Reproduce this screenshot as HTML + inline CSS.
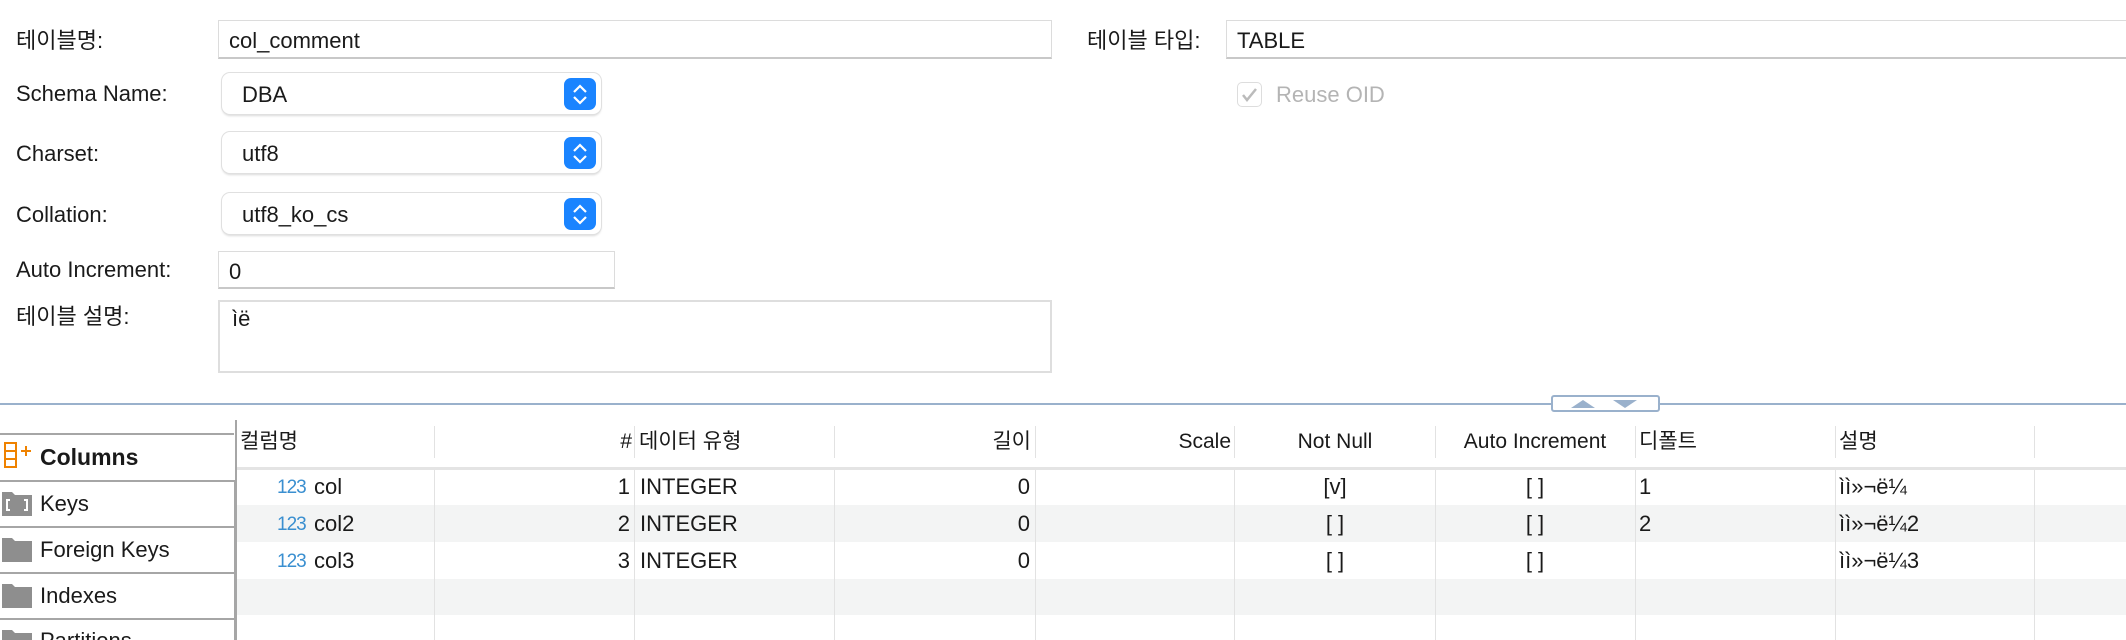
<!DOCTYPE html>
<html style="overflow:hidden;height:640px"><head><meta charset="utf-8"><style>
*{box-sizing:border-box;margin:0;padding:0}
body{width:2126px;height:640px;background:#fff;position:relative;overflow:hidden;font-family:"Liberation Sans","Noto Sans CJK KR",sans-serif;font-size:22px;color:#1a1a1a}
.a{position:absolute;white-space:nowrap;line-height:26px}
.tf{position:absolute;border:1px solid #dcdcdc;border-bottom:2px solid #c8c8c8;background:#fff;padding-left:10px;line-height:40px}
.dd{position:absolute;border-radius:8px;background:#fff;box-shadow:0 0 0 1px #e0e0e0,0 2px 2px rgba(0,0,0,.15);padding-left:20px}
.st{position:absolute;right:5px;top:5px;width:32px;height:32px;border-radius:7px;background:#1a84ff}
.tab{position:absolute;left:0;width:236px;height:46px;border-top:2px solid #a6a6a6;border-right:2px solid #a6a6a6;background:#fff}
.vl{position:absolute;width:1px;background:#e2e2e2}
</style></head><body>
<div class="a" style="left:16px;top:28px">테이블명:</div>
<div class="tf" style="left:218px;top:20px;width:834px;height:39px">col_comment</div>
<div class="a" style="left:16px;top:81px">Schema Name:</div>
<div class="dd" style="left:222px;top:73px;width:379px;height:41px;line-height:43px">DBA<div class="st"><svg width="32" height="32"><path d="M10 14l6-6 6 6M10 19l6 6 6-6" stroke="#fff" stroke-width="2.2" fill="none"/></svg></div></div>
<div class="a" style="left:16px;top:141px">Charset:</div>
<div class="dd" style="left:222px;top:132px;width:379px;height:41px;line-height:43px">utf8<div class="st"><svg width="32" height="32"><path d="M10 14l6-6 6 6M10 19l6 6 6-6" stroke="#fff" stroke-width="2.2" fill="none"/></svg></div></div>
<div class="a" style="left:16px;top:202px">Collation:</div>
<div class="dd" style="left:222px;top:193px;width:379px;height:41px;line-height:43px">utf8_ko_cs<div class="st"><svg width="32" height="32"><path d="M10 14l6-6 6 6M10 19l6 6 6-6" stroke="#fff" stroke-width="2.2" fill="none"/></svg></div></div>
<div class="a" style="left:16px;top:257px">Auto Increment:</div>
<div class="tf" style="left:218px;top:251px;width:397px;height:38px">0</div>
<div class="a" style="left:16px;top:304px">테이블 설명:</div>
<div class="tf" style="left:218px;top:300px;width:834px;height:73px;border:2px solid #dedede;line-height:34px;padding-left:12px">ìë</div>
<div class="a" style="left:1087px;top:28px">테이블 타입:</div>
<div class="tf" style="left:1226px;top:20px;width:910px;height:39px">TABLE</div>
<div class="a" style="left:1237px;top:82px;width:25px;height:25px;border:1px solid #ddd;border-radius:5px"><svg width="23" height="23"><path d="M5 12l4 5 9-11" stroke="#bbb" stroke-width="2.5" fill="none"/></svg></div>
<div class="a" style="left:1276px;top:82px;color:#b4b4b4">Reuse OID</div>
<div class="a" style="left:0;top:403px;width:2126px;height:2px;background:#9ab1cc"></div>
<div class="a" style="left:1551px;top:395px;width:109px;height:17px;border:2px solid #9ab1cc;border-radius:3px;background:#fff;line-height:0"><svg width="105" height="13"><path d="M18 11l12-8 12 8z" fill="#9ab1cc"/><path d="M60 3l24 0-12 8z" fill="#9ab1cc"/></svg></div>
<!-- tabs -->
<div class="a" style="left:235px;top:420px;width:2px;height:220px;background:#a6a6a6"></div>
<div class="tab" style="top:433px;border-right:none;width:234px"></div>
<div class="a" style="left:4px;top:442px;line-height:0"><svg width="28" height="28"><rect x="1" y="1" width="11" height="24" fill="none" stroke="#ef8200" stroke-width="2"/><path d="M1 9h11M1 17h11M17 9h10M22 4v10" stroke="#ef8200" stroke-width="2"/></svg></div>
<div class="a" style="left:40px;top:444px;font-weight:bold;font-size:23px">Columns</div>
<div class="tab" style="top:480px"></div>
<div class="a" style="left:2px;top:490px;line-height:0"><svg width="30" height="26"><path d="M0 2h10l3 3h17v21H0z" fill="#8e8e8e"/><path d="M8 10h-3v10h3M22 10h3v10h-3" stroke="#fff" stroke-width="2" fill="none"/></svg></div>
<div class="a" style="left:40px;top:491px">Keys</div>
<div class="tab" style="top:526px"></div>
<div class="a" style="left:2px;top:536px;line-height:0"><svg width="30" height="26"><path d="M0 2h10l3 3h17v21H0z" fill="#8e8e8e"/></svg></div>
<div class="a" style="left:40px;top:537px">Foreign Keys</div>
<div class="tab" style="top:572px"></div>
<div class="a" style="left:2px;top:582px;line-height:0"><svg width="30" height="26"><path d="M0 2h10l3 3h17v21H0z" fill="#8e8e8e"/></svg></div>
<div class="a" style="left:40px;top:583px">Indexes</div>
<div class="tab" style="top:618px;height:22px"></div>
<div class="a" style="left:2px;top:628px;line-height:0"><svg width="30" height="12"><path d="M0 2h10l3 3h17v7H0z" fill="#8e8e8e"/></svg></div>
<div class="a" style="left:40px;top:628px">Partitions</div>
<!-- table -->
<div class="a" style="left:237px;top:505px;width:1889px;height:37px;background:#f3f4f4"></div>
<div class="a" style="left:237px;top:579px;width:1889px;height:36px;background:#f3f4f4"></div>
<div class="a" style="left:237px;top:467px;width:1889px;height:3px;background:#e4e4e4"></div>
<div class="vl" style="left:434px;top:426px;height:32px"></div><div class="vl" style="left:434px;top:470px;height:170px"></div>
<div class="vl" style="left:634px;top:426px;height:32px"></div><div class="vl" style="left:634px;top:470px;height:170px"></div>
<div class="vl" style="left:834px;top:426px;height:32px"></div><div class="vl" style="left:834px;top:470px;height:170px"></div>
<div class="vl" style="left:1035px;top:426px;height:32px"></div><div class="vl" style="left:1035px;top:470px;height:170px"></div>
<div class="vl" style="left:1234px;top:426px;height:32px"></div><div class="vl" style="left:1234px;top:470px;height:170px"></div>
<div class="vl" style="left:1435px;top:426px;height:32px"></div><div class="vl" style="left:1435px;top:470px;height:170px"></div>
<div class="vl" style="left:1635px;top:426px;height:32px"></div><div class="vl" style="left:1635px;top:470px;height:170px"></div>
<div class="vl" style="left:1835px;top:426px;height:32px"></div><div class="vl" style="left:1835px;top:470px;height:170px"></div>
<div class="vl" style="left:2034px;top:426px;height:32px"></div><div class="vl" style="left:2034px;top:470px;height:170px"></div>
<div class="a" style="left:240px;top:429px;font-size:21px">컬럼명</div>
<div class="a" style="left:600px;top:429px;width:32px;text-align:right;font-size:21px">#</div>
<div class="a" style="left:639px;top:429px;font-size:21px">데이터 유형</div>
<div class="a" style="left:930px;top:429px;width:101px;text-align:right;font-size:21px">길이</div>
<div class="a" style="left:1130px;top:429px;width:101px;text-align:right;font-size:21px">Scale</div>
<div class="a" style="left:1235px;top:429px;width:200px;text-align:center;font-size:21px">Not Null</div>
<div class="a" style="left:1435px;top:429px;width:200px;text-align:center;font-size:21px">Auto Increment</div>
<div class="a" style="left:1639px;top:429px;font-size:21px">디폴트</div>
<div class="a" style="left:1839px;top:429px;font-size:21px">설명</div>
<!-- rows -->
<div class="a" style="left:277px;top:475px;color:#3a8fd0;font-size:19px;letter-spacing:-1px">123</div><div class="a" style="left:314px;top:474px">col</div>
<div class="a" style="left:560px;top:474px;width:70px;text-align:right">1</div><div class="a" style="left:640px;top:474px">INTEGER</div>
<div class="a" style="left:930px;top:474px;width:100px;text-align:right">0</div>
<div class="a" style="left:1235px;top:474px;width:200px;text-align:center">[v]</div>
<div class="a" style="left:1435px;top:474px;width:200px;text-align:center">[ ]</div>
<div class="a" style="left:1639px;top:474px">1</div><div class="a" style="left:1839px;top:474px">ìì»¬ë¼</div>
<div class="a" style="left:277px;top:512px;color:#3a8fd0;font-size:19px;letter-spacing:-1px">123</div><div class="a" style="left:314px;top:511px">col2</div>
<div class="a" style="left:560px;top:511px;width:70px;text-align:right">2</div><div class="a" style="left:640px;top:511px">INTEGER</div>
<div class="a" style="left:930px;top:511px;width:100px;text-align:right">0</div>
<div class="a" style="left:1235px;top:511px;width:200px;text-align:center">[ ]</div>
<div class="a" style="left:1435px;top:511px;width:200px;text-align:center">[ ]</div>
<div class="a" style="left:1639px;top:511px">2</div><div class="a" style="left:1839px;top:511px">ìì»¬ë¼2</div>
<div class="a" style="left:277px;top:549px;color:#3a8fd0;font-size:19px;letter-spacing:-1px">123</div><div class="a" style="left:314px;top:548px">col3</div>
<div class="a" style="left:560px;top:548px;width:70px;text-align:right">3</div><div class="a" style="left:640px;top:548px">INTEGER</div>
<div class="a" style="left:930px;top:548px;width:100px;text-align:right">0</div>
<div class="a" style="left:1235px;top:548px;width:200px;text-align:center">[ ]</div>
<div class="a" style="left:1435px;top:548px;width:200px;text-align:center">[ ]</div>
<div class="a" style="left:1839px;top:548px">ìì»¬ë¼3</div>
</body></html>
